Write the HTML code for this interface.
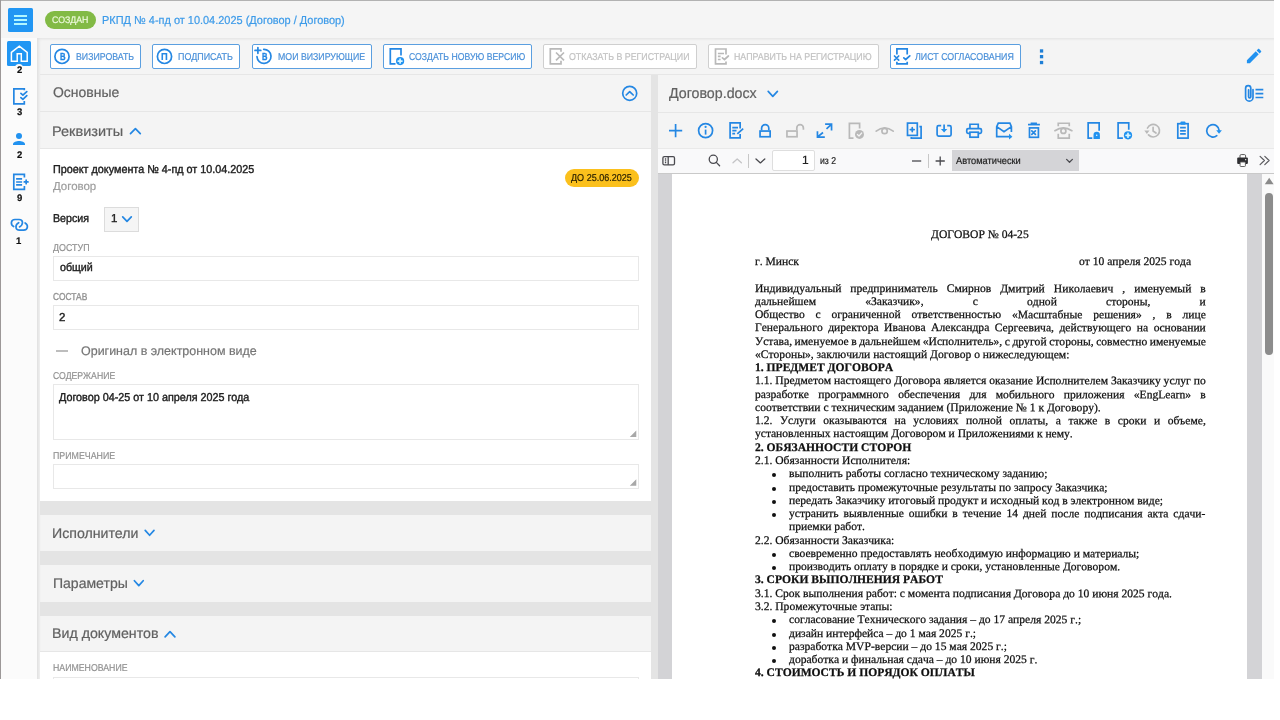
<!DOCTYPE html>
<html lang="ru"><head><meta charset="utf-8"><title>РКПД № 4-пд</title>
<style>
html,body{margin:0;padding:0;background:#fff;}
body{width:1280px;height:720px;overflow:hidden;position:relative;font-family:"Liberation Sans",sans-serif;}
#app{position:absolute;left:0;top:0;width:1280px;height:679px;overflow:hidden;will-change:transform;}
#app div{position:absolute;box-sizing:border-box;}
.t{white-space:pre;line-height:1;transform-origin:0 0;-webkit-text-stroke:0.2px currentColor;}
.d{white-space:pre;line-height:1;transform-origin:0 0;transform:rotate(0.03deg);font-kerning:none;font-variant-ligatures:none;font-family:"Liberation Serif",serif;font-size:11.59px;color:#101010;-webkit-text-stroke:0.25px #101010;}
.bl{width:4px;height:4px;border-radius:50%;background:#111;}
.btn{top:44px;height:25px;border:1px solid #5b9fe0;border-radius:2px;background:#fff;}
.btn.dis{border-color:#cfcfcf;}
.inp{left:53px;width:586px;border:1px solid #e8e8e8;background:#fff;}
.hdr{left:40px;width:611px;background:#f4f4f4;}
.gap{left:40px;width:611px;background:#e4e4e4;}
</style></head><body>
<div id="app">
<!-- frame lines -->
<div style="left:0;top:0;width:1274px;height:1px;background:#b2b2b2"></div>
<div style="left:0;top:1px;width:1274px;height:37px;background:#f5f5f5"></div>
<div style="left:0;top:0;width:1px;height:679px;background:#9c9898"></div>
<!-- sidebar -->
<div style="left:1px;top:38px;width:36px;height:641px;background:#fbfbfb"></div>
<!-- content base -->
<div style="left:37px;top:38px;width:1237px;height:641px;background:#f4f4f4;box-shadow:inset 3px 2px 3px -1px rgba(0,0,0,.08)"></div>
<!-- toolbar -->
<div style="left:40px;top:74px;width:1234px;height:1px;background:#e6e6e6"></div>
<div class="btn" style="left:50px;width:91px"></div>
<div class="btn" style="left:152px;width:88px"></div>
<div class="btn" style="left:252px;width:120px"></div>
<div class="btn" style="left:383px;width:149px"></div>
<div class="btn dis" style="left:543px;width:154px"></div>
<div class="btn dis" style="left:708.3px;width:170.3px"></div>
<div class="btn" style="left:890px;width:131px"></div>
<!-- left panel -->
<div style="left:40px;top:111px;width:611px;height:1px;background:#e6e6e6"></div>
<div style="left:40px;top:148px;width:611px;height:1px;background:#e6e6e6"></div>
<div style="left:40px;top:149px;width:611px;height:352px;background:#fff"></div>
<div style="left:565px;top:169px;width:74px;height:18px;border-radius:9px;background:#fbc01c"></div>
<div style="left:104px;top:207px;width:35px;height:25px;background:#f5f5f5;border:1px solid #dcdcdc"></div>
<div class="inp" style="top:256px;height:25px"></div>
<div class="inp" style="top:305px;height:25px"></div>
<div style="left:56px;top:350px;width:12px;height:1.5px;background:#bdbdbd"></div>
<div class="inp" style="top:384px;height:56px"></div>
<div class="inp" style="top:464.3px;height:24.5px"></div>
<div class="gap" style="top:501px;height:13.5px"></div>
<div class="gap" style="top:551px;height:14px"></div>
<div class="gap" style="top:602px;height:13.5px"></div>
<div style="left:40px;top:651px;width:611px;height:1px;background:#e6e6e6"></div>
<div style="left:40px;top:652px;width:611px;height:30px;background:#fff"></div>
<div class="inp" style="top:676.5px;height:25px"></div>
<!-- splitter -->
<div style="left:651px;top:75px;width:7px;height:604px;background:#e4e4e4"></div>
<!-- right panel -->
<div style="left:658px;top:111.5px;width:616px;height:1px;background:#e6e6e6"></div>
<div style="left:658px;top:147.5px;width:616px;height:1px;background:#e9e9e9"></div>
<div style="left:658px;top:148.5px;width:616px;height:24px;background:#f9f9fa"></div>
<div style="left:658px;top:172.5px;width:616px;height:1px;background:#c9c9c9"></div>
<div style="left:658px;top:173.5px;width:616px;height:506px;background:#d3d3d6"></div>
<div style="left:672.2px;top:173.5px;width:574.8px;height:506px;background:#fff"></div>
<div style="left:1262px;top:173.5px;width:12px;height:506px;background:#fafafa"></div>
<div style="left:1264.5px;top:193px;width:8.4px;height:161.5px;border-radius:4.2px;background:#8c8c8c"></div>
<div style="left:772.2px;top:150.1px;width:42.4px;height:20.7px;background:#fff;border:1px solid #dedede;border-radius:2px"></div>
<div style="left:952px;top:150px;width:127px;height:21px;background:#d4d4d7"></div>
<div style="left:748px;top:154px;width:1px;height:13.5px;background:#c8c8c8"></div>
<div style="left:928px;top:154px;width:1px;height:13.5px;background:#c8c8c8"></div>
<div style="left:45px;top:11px;width:51px;height:18px;border-radius:9px;background:#82ba45"></div>
<!-- sidebar buttons -->
<div style="left:8.4px;top:8px;width:24.4px;height:24px;border-radius:1.5px;background:#2196f3"></div>
<div style="left:14px;top:15px;width:13px;height:2px;background:#b0f6ff"></div>
<div style="left:14px;top:19px;width:13px;height:2px;background:#b0f6ff"></div>
<div style="left:14px;top:23px;width:13px;height:2px;background:#b0f6ff"></div>
<div style="left:7px;top:41.3px;width:24px;height:24.3px;border-radius:1.5px;background:#2196f3"></div>
<div style="left:15px;top:63.8px;width:8.4px;height:8.4px;border-radius:50%;background:#fbfbfb"></div>
<div class="t" style="left:51.70px;top:15.00px;font-size:9.5px;color:#eefadc;transform:scale(0.9254,1.000) rotate(0.03deg);">СОЗДАН</div>
<div class="t" style="left:101.80px;top:15.00px;font-size:11.5px;color:#3d9be9;transform:scale(0.9521,1.000) rotate(0.03deg);">РКПД № 4-пд от 10.04.2025 (Договор / Договор)</div>
<div class="t" style="left:75.60px;top:52.00px;font-size:10px;color:#4a90d9;transform:scale(0.8762,1.000) rotate(0.03deg);">ВИЗИРОВАТЬ</div>
<div class="t" style="left:178.00px;top:52.00px;font-size:10px;color:#4a90d9;transform:scale(0.8935,1.000) rotate(0.03deg);">ПОДПИСАТЬ</div>
<div class="t" style="left:277.50px;top:52.00px;font-size:10px;color:#4a90d9;transform:scale(0.8783,1.000) rotate(0.03deg);">МОИ ВИЗИРУЮЩИЕ</div>
<div class="t" style="left:409.20px;top:52.00px;font-size:10px;color:#4a90d9;transform:scale(0.8677,1.000) rotate(0.03deg);">СОЗДАТЬ НОВУЮ ВЕРСИЮ</div>
<div class="t" style="left:569.00px;top:52.00px;font-size:10px;color:#c2c2c2;transform:scale(0.8834,1.000) rotate(0.03deg);">ОТКАЗАТЬ В РЕГИСТРАЦИИ</div>
<div class="t" style="left:733.90px;top:52.00px;font-size:10px;color:#c2c2c2;transform:scale(0.8825,1.000) rotate(0.03deg);">НАПРАВИТЬ НА РЕГИСТРАЦИЮ</div>
<div class="t" style="left:915.20px;top:52.00px;font-size:10px;color:#4a90d9;transform:scale(0.8862,1.000) rotate(0.03deg);">ЛИСТ СОГЛАСОВАНИЯ</div>
<div class="t" style="left:59.60px;top:52.00px;font-size:10.2px;color:#2487e3;font-weight:700;transform:scale(0.7571,1.000) rotate(0.03deg);-webkit-text-stroke-width:0.35px;">В</div>
<div class="t" style="left:161.30px;top:52.00px;font-size:10.2px;color:#2487e3;font-weight:700;transform:scale(0.9143,1.000) rotate(0.03deg);">П</div>
<div class="t" style="left:261.80px;top:52.00px;font-size:10.2px;color:#2487e3;font-weight:700;transform:scale(0.7429,1.000) rotate(0.03deg);-webkit-text-stroke-width:0.35px;">В</div>
<div class="t" style="left:52.80px;top:85.00px;font-size:14px;color:#616161;transform:scale(0.9964,1.000) rotate(0.03deg);">Основные</div>
<div class="t" style="left:52.46px;top:124.00px;font-size:14px;color:#616161;transform:scale(1.0364,1.000) rotate(0.03deg);">Реквизиты</div>
<div class="t" style="left:52.49px;top:526.00px;font-size:14px;color:#616161;transform:scale(1.0121,1.000) rotate(0.03deg);">Исполнители</div>
<div class="t" style="left:52.50px;top:576.00px;font-size:14px;color:#616161;transform:scale(1.0018,1.000) rotate(0.03deg);">Параметры</div>
<div class="t" style="left:52.49px;top:626.00px;font-size:14px;color:#616161;transform:scale(1.0147,1.000) rotate(0.03deg);">Вид документов</div>
<div class="t" style="left:668.90px;top:86.00px;font-size:14.5px;color:#616161;transform:scale(0.9805,1.000) rotate(0.03deg);">Договор.docx</div>
<div class="t" style="left:53.10px;top:164.00px;font-size:11.5px;color:#212121;transform:scale(0.9388,1.000) rotate(0.03deg);-webkit-text-stroke-width:0.4px;">Проект документа № 4-пд от 10.04.2025</div>
<div class="t" style="left:52.90px;top:181.00px;font-size:11.5px;color:#9e9e9e;transform:scale(0.9947,1.000) rotate(0.03deg);">Договор</div>
<div class="t" style="left:570.80px;top:173.00px;font-size:10px;color:#2a2000;transform:scale(0.9024,1.000) rotate(0.03deg);">ДО 25.06.2025</div>
<div class="t" style="left:53.00px;top:213.00px;font-size:11.5px;color:#212121;transform:scale(0.9266,1.000) rotate(0.03deg);-webkit-text-stroke-width:0.4px;">Версия</div>
<div class="t" style="left:111.25px;top:213.00px;font-size:11.5px;color:#212121;transform:scale(1.0000,1.000) rotate(0.03deg);-webkit-text-stroke-width:0.4px;">1</div>
<div class="t" style="left:53.00px;top:243.00px;font-size:10px;color:#929292;transform:scale(0.8899,1.000) rotate(0.03deg);">ДОСТУП</div>
<div class="t" style="left:60.20px;top:262.00px;font-size:11.5px;color:#212121;transform:scale(0.9292,1.000) rotate(0.03deg);-webkit-text-stroke-width:0.4px;">общий</div>
<div class="t" style="left:53.00px;top:292.00px;font-size:10px;color:#929292;transform:scale(0.8415,1.000) rotate(0.03deg);-webkit-text-stroke-width:0.35px;">СОСТАВ</div>
<div class="t" style="left:59.30px;top:312.00px;font-size:11.5px;color:#212121;transform:scale(1.0000,1.000) rotate(0.03deg);-webkit-text-stroke-width:0.4px;">2</div>
<div class="t" style="left:80.90px;top:345.00px;font-size:12.5px;color:#757575;transform:scale(0.9974,1.000) rotate(0.03deg);">Оригинал в электронном виде</div>
<div class="t" style="left:53.00px;top:371.00px;font-size:10px;color:#929292;transform:scale(0.8696,1.000) rotate(0.03deg);">СОДЕРЖАНИЕ</div>
<div class="t" style="left:59.40px;top:392.00px;font-size:11.5px;color:#212121;transform:scale(0.9378,1.000) rotate(0.03deg);-webkit-text-stroke-width:0.4px;">Договор 04-25 от 10 апреля 2025 года</div>
<div class="t" style="left:53.00px;top:451.00px;font-size:10px;color:#929292;transform:scale(0.8829,1.000) rotate(0.03deg);">ПРИМЕЧАНИЕ</div>
<div class="t" style="left:53.00px;top:663.00px;font-size:10px;color:#929292;transform:scale(0.8749,1.000) rotate(0.03deg);">НАИМЕНОВАНИЕ</div>
<div class="t" style="left:16.90px;top:65.00px;font-size:9.5px;color:#111;font-weight:700;transform:scale(1.0000,1.000) rotate(0.03deg);">2</div>
<div class="t" style="left:16.90px;top:107.00px;font-size:9.5px;color:#111;font-weight:700;transform:scale(1.0000,1.000) rotate(0.03deg);">3</div>
<div class="t" style="left:16.90px;top:150.00px;font-size:9.5px;color:#111;font-weight:700;transform:scale(1.0000,1.000) rotate(0.03deg);">2</div>
<div class="t" style="left:16.90px;top:193.00px;font-size:9.5px;color:#111;font-weight:700;transform:scale(1.0000,1.000) rotate(0.03deg);">9</div>
<div class="t" style="left:16.40px;top:236.00px;font-size:9.5px;color:#111;font-weight:700;transform:scale(1.0000,1.000) rotate(0.03deg);">1</div>
<div class="t" style="left:801.62px;top:154.00px;font-size:12px;color:#222;transform:scale(1.0000,1.000) rotate(0.03deg);">1</div>
<div class="t" style="left:819.75px;top:156.00px;font-size:10px;color:#222;transform:scale(0.8707,1.000) rotate(0.03deg);">из 2</div>
<div class="t" style="left:956.00px;top:156.00px;font-size:10px;color:#222;transform:scale(0.9268,1.000) rotate(0.03deg);">Автоматически</div>
<div class="d" style="top:229.00px;left:931.36px;">ДОГОВОР № 04-25</div>
<div class="d" style="top:256.00px;left:754.80px;">г. Минск</div>
<div class="d" style="top:256.00px;left:1079.30px;">от 10 апреля 2025 года</div>
<div class="d" style="top:283.00px;left:754.80px;word-spacing:6.109px;">Индивидуальный предприниматель Смирнов Дмитрий Николаевич , именуемый в</div>
<div class="d" style="top:296.00px;left:754.80px;word-spacing:46.260px;">дальнейшем «Заказчик», с одной стороны, и</div>
<div class="d" style="top:309.00px;left:754.80px;word-spacing:7.910px;">Общество с ограниченной ответственностью «Масштабные решения» , в лице</div>
<div class="d" style="top:322.00px;left:754.80px;word-spacing:2.590px;">Генерального директора Иванова Александра Сергеевича, действующего на основании</div>
<div class="d" style="top:336.00px;left:754.80px;word-spacing:-0.337px;">Устава, именуемое в дальнейшем «Исполнитель», с другой стороны, совместно именуемые</div>
<div class="d" style="top:349.00px;left:754.80px;">«Стороны», заключили настоящий Договор о нижеследующем:</div>
<div class="d" style="top:362.00px;font-weight:700;left:754.80px;">1. ПРЕДМЕТ ДОГОВОРА</div>
<div class="d" style="top:375.00px;left:754.80px;word-spacing:0.058px;">1.1. Предметом настоящего Договора является оказание Исполнителем Заказчику услуг по</div>
<div class="d" style="top:389.00px;left:754.80px;word-spacing:6.419px;">разработке программного обеспечения для мобильного приложения «EngLearn» в</div>
<div class="d" style="top:402.00px;left:754.80px;">соответствии с техническим заданием (Приложение № 1 к Договору).</div>
<div class="d" style="top:415.00px;left:754.80px;word-spacing:4.626px;">1.2. Услуги оказываются на условиях полной оплаты, а также в сроки и объеме,</div>
<div class="d" style="top:428.00px;left:754.80px;">установленных настоящим Договором и Приложениями к нему.</div>
<div class="d" style="top:442.00px;font-weight:700;left:754.80px;">2. ОБЯЗАННОСТИ СТОРОН</div>
<div class="d" style="top:455.00px;left:754.80px;">2.1. Обязанности Исполнителя:</div>
<div class="d" style="top:468.00px;left:789.20px;">выполнить работы согласно техническому заданию;</div>
<div class="d" style="top:482.00px;left:789.20px;">предоставить промежуточные результаты по запросу Заказчика;</div>
<div class="d" style="top:495.00px;left:789.20px;">передать Заказчику итоговый продукт и исходный код в электронном виде;</div>
<div class="d" style="top:508.00px;left:789.20px;word-spacing:2.046px;">устранить выявленные ошибки в течение 14 дней после подписания акта сдачи-</div>
<div class="d" style="top:521.00px;left:789.20px;">приемки работ.</div>
<div class="d" style="top:535.00px;left:754.80px;">2.2. Обязанности Заказчика:</div>
<div class="d" style="top:548.00px;left:789.20px;">своевременно предоставлять необходимую информацию и материалы;</div>
<div class="d" style="top:561.00px;left:789.20px;">производить оплату в порядке и сроки, установленные Договором.</div>
<div class="d" style="top:574.00px;font-weight:700;left:754.80px;">3. СРОКИ ВЫПОЛНЕНИЯ РАБОТ</div>
<div class="d" style="top:588.00px;left:754.80px;">3.1. Срок выполнения работ: с момента подписания Договора до 10 июня 2025 года.</div>
<div class="d" style="top:601.00px;left:754.80px;">3.2. Промежуточные этапы:</div>
<div class="d" style="top:614.00px;left:789.20px;">согласование Технического задания – до 17 апреля 2025 г.;</div>
<div class="d" style="top:628.00px;left:789.20px;">дизайн интерфейса – до 1 мая 2025 г.;</div>
<div class="d" style="top:641.00px;left:789.20px;">разработка MVP-версии – до 15 мая 2025 г.;</div>
<div class="d" style="top:654.00px;left:789.20px;">доработка и финальная сдача – до 10 июня 2025 г.</div>
<div class="d" style="top:667.00px;font-weight:700;left:754.80px;">4. СТОИМОСТЬ И ПОРЯДОК ОПЛАТЫ</div>
<div class="bl" style="left:772.4px;top:472.50px"></div>
<div class="bl" style="left:772.4px;top:486.50px"></div>
<div class="bl" style="left:772.4px;top:499.50px"></div>
<div class="bl" style="left:772.4px;top:512.50px"></div>
<div class="bl" style="left:772.4px;top:552.50px"></div>
<div class="bl" style="left:772.4px;top:565.50px"></div>
<div class="bl" style="left:772.4px;top:618.50px"></div>
<div class="bl" style="left:772.4px;top:632.50px"></div>
<div class="bl" style="left:772.4px;top:645.50px"></div>
<div class="bl" style="left:772.4px;top:658.50px"></div>
<svg width="1280" height="679" viewBox="0 0 1280 679" style="position:absolute;left:0;top:0" fill="none" stroke-linecap="butt" stroke-linejoin="miter">
<defs><style>
.b{stroke:#2487e3;stroke-width:1.7}
.g{stroke:#b9b9b9;stroke-width:1.7}
.k{stroke:#4a4a4f;stroke-width:1.3}
.bf{fill:#2192f0;stroke:none}
.gf{fill:#b9b9b9;stroke:none}
.r{stroke-linecap:round;stroke-linejoin:round}
.lt{font-family:"Liberation Sans",sans-serif;font-weight:700;font-size:9.5px;fill:#2487e3;text-anchor:middle}
</style></defs>
<!-- sidebar: home -->
<path d="M11.4 52.3 L19.3 46.1 L27.2 52.3 V61.2 H21.3 V53.8 H17.2 V61.2 H11.4 Z" stroke="#fff" stroke-width="1.5" stroke-linejoin="miter"/>
<!-- sidebar: doc-check -->
<path class="b" d="M24.3 101.100 V103.900 H13.850 V88.800 H24.300 V90.300"/>
<path class="b r" stroke-width="1.6" d="M20.900 93.300 l2 1.800 l3.900 -3.500 M20.900 97.600 l2 1.800 l3.900 -3.700"/>
<!-- sidebar: person -->
<circle class="bf" cx="19" cy="135.900" r="3"/>
<path class="bf" d="M13 145.100 v-1 c0-2.300 3.500-3.200 6-3.200 s6 0.900 6 3.200 v1 z"/>
<!-- sidebar: doc-lines-plus -->
<path class="b" d="M24.400 177.500 V174.400 H13.800 V189.400 H24.400 V186.100" stroke-width="1.600"/>
<path class="b" d="M16.100 178.900 h6 M16.100 182 h6 M16.100 184.900 h6" stroke-width="1.600"/>
<path class="b r" d="M24.300 181.900 h3.700 M26.150 180 v3.700" stroke-width="2"/>
<!-- sidebar: link -->
<path class="b r" stroke-width="1.700" d="M13.600 226.500 C10.400 224.600 10.500 219.500 15 219.500 H19 C23.600 219.500 23.500 224.700 19.500 226.900 M25.100 222.900 C28.500 224.700 28.300 230.200 23.600 230.200 H19.600 C15 230.200 14.800 224.800 18.700 222.700"/>
<!-- toolbar buttons -->
<circle class="b" cx="62" cy="56.4" r="7.1" stroke-width="1.4"/>
<circle class="b" cx="164.5" cy="56.4" r="7.1" stroke-width="1.4"/>
<path class="b r" stroke-width="1.300" d="M263.700 49.400 A7 7 0 1 1 257 56.700"/>
<path class="b r" stroke-width="1.600" d="M255 50.400 h5.800 M257.900 47.500 v5.800"/>
<path class="b" d="M395.500 63.900 H390.300 V48.900 H401 V55.600"/>
<circle class="bf" cx="400.100" cy="61.100" r="4.100"/><path class="r" d="M398.200 61.100 h3.800 M400.100 59.200 v3.800" stroke="#d8f6ff" stroke-width="1.700"/>
<path class="g" d="M561 51.700 V48.900 H550.300 V63.900 H561 V60.700"/><path class="g" stroke-width="1.500" d="M556 52.500 l8 7.800 M564 52.500 l-8 7.800"/>
<path class="g" d="M726 54.500 V49 H715.500 V63.900 H726 V61.500"/><path class="g" stroke-width="1.400" d="M717.900 53.500 h6.100 M717.900 56.400 h2.700 M717.900 59.500 h2.700"/><path class="g r" stroke-width="1.500" d="M722.400 57.800 l2.100 1.700 l3.900 -3.500"/>
<path class="b" d="M896.900 54.500 V48.900 H907.200 V54.500 M896.900 61.800 V63.900 H907.200 V61.800"/><path class="b r" stroke-width="1.600" d="M894.500 56 l4.200 4.100 M898.700 56 l-4.200 4.100 M903.800 57.800 l1.900 1.700 l4.100 -3.700"/>
<rect x="1039.900" y="49.300" width="3.300" height="3.300" fill="#1e7fd6"/><rect x="1039.900" y="55" width="3.300" height="3.300" fill="#1e7fd6"/><rect x="1039.900" y="60.900" width="3.300" height="3.300" fill="#1e7fd6"/>
<path class="bf" transform="translate(1244.500 46.400) scale(0.800)" d="M3 17.250V21h3.750L17.810 9.940l-3.750-3.750L3 17.250zM20.710 7.040c.39-.39.390-1.020 0-1.410l-2.340-2.340c-.39-.39-1.020-.39-1.410 0l-1.830 1.830 3.750 3.750 1.830-1.830z"/>
<!-- panel header icons -->
<circle class="b" cx="629.700" cy="93.300" r="7" stroke-width="1.500"/><path class="b r" stroke-width="1.600" d="M626.200 95 l3.500 -3.400 l3.500 3.400"/>
<path class="b r" stroke-width="1.700" d="M130.500 133.700 L135.400 128.700 L140.300 133.700"/>
<path class="b r" stroke-width="1.700" d="M145.200 530.400 L149.600 535.300 L154 530.400"/>
<path class="b r" stroke-width="1.700" d="M134.400 580.700 L138.800 585.600 L143.200 580.700"/>
<path class="b r" stroke-width="1.700" d="M165.100 636.900 L170 631.700 L174.900 636.900"/>
<path class="b r" stroke-width="1.700" d="M768.200 91.400 L772.800 96.300 L777.400 91.400"/>
<path class="b r" stroke-width="1.600" d="M122.700 216.800 L127 221.300 L131.300 216.800"/>
<!-- paperclip list -->
<path class="b r" stroke-width="1.300" d="M1253 89.500 V97.400 a3.700 3.700 0 0 1 -7.400 0 V88.300 a2.600 2.600 0 0 1 5.200 0 V96.800 a1.100 1.100 0 0 1 -2.200 0 V89.800"/>
<path class="b" stroke-width="1.700" d="M1255.500 89.700 h7.800 M1255.500 93.600 h7.800 M1255.500 97.500 h7.800"/>
<!-- file toolbar icons -->
<path class="b" stroke-width="1.800" d="M669 130.700 h13.200 M675.600 124.100 v13.200"/>
<circle class="b" cx="705.600" cy="130.600" r="7" stroke-width="1.600"/><path class="b" stroke-width="1.700" d="M705.600 129.600 v5"/><circle class="bf" cx="705.600" cy="126.900" r="1.100"/>
<path class="b" stroke-width="1.900" d="M740.150 128.400 V122.950 H730.100 V137.950 H740.150 V134"/><path class="b" stroke-width="1.500" d="M732.300 127.700 h5.700 M732.300 130.600 h4.200 M732.300 133.700 h2.800"/><path class="b" stroke-width="1.800" d="M737.300 133.900 l5.900 -5.300"/>
<rect class="b" stroke-width="1.900" x="760.050" y="131.050" width="10.100" height="5.700"/><path class="b" stroke-width="1.600" d="M761.600 130.200 v-2 a3.600 3.600 0 0 1 7.200 0 v2"/>
<rect class="g" stroke-width="1.900" x="786.950" y="131.050" width="10.100" height="5.700"/><path class="g" stroke-width="1.600" d="M796.800 130.200 v-2.300 a3.300 3.300 0 0 1 6.600 0 v1.900"/>
<path class="b" stroke-width="1.700" d="M825.100 124.150 H831.550 V130.600 M831.400 124.300 L826.500 128.800 M817.450 131.200 V137.050 H824.800 M817.600 136.900 L823 132.500"/>
<path class="g" d="M853.500 138.100 H849.400 V123.400 H859.600 V128.500"/><circle class="gf" cx="859.500" cy="134.400" r="4.500"/><path class="r" d="M857.400 134.500 l1.600 1.500 l2.700 -3" stroke="#f4f4f4" stroke-width="1.200"/>
<path class="g r" stroke-width="1.500" d="M876.200 131.200 Q884.600 124.600 893.200 131.200"/><circle class="g" cx="884.600" cy="131" r="2.700" stroke-width="1.500"/>
<rect class="b" x="907.500" y="123.100" width="9.800" height="12.300"/><path class="b" d="M919.400 126.700 h1.700 V138.100 H911.300 v-1.200"/><path class="b r" stroke-width="1.700" d="M910.300 129.600 h3.900 M912.250 127.650 v3.900"/>
<path class="b" stroke-width="1.600" d="M941.200 125.700 H938.600 a1.500 1.500 0 0 0 -1.500 1.500 V134.600 a1.500 1.500 0 0 0 1.500 1.500 H949.600 a1.500 1.500 0 0 0 1.500 -1.500 V127.200 a1.500 1.500 0 0 0 -1.500 -1.500 H947.200"/><path class="b" d="M944.100 124.400 v5.500"/><path class="bf" d="M940.900 129 h6.400 l-3.200 3.500 z"/>
<path class="b" stroke-width="1.500" d="M969.950 128.600 V124.250 H978.250 V128.600"/><rect class="b" stroke-width="1.500" x="966.750" y="128.700" width="14.700" height="4.700" rx="1.300"/><rect class="b" stroke-width="1.500" x="969.950" y="132.200" width="8.300" height="5" fill="#f4f4f4"/>
<path class="b" stroke-width="1.600" d="M1011.400 131.900 V126.600 L1009.900 123.200 H998.300 L996.700 126.600 V136.700 H1009.600 M996.700 126.600 L1004 131.600 L1011.400 126.600"/><path class="bf" d="M1009 133.800 L1012.400 136.700 L1009 139.600 Z"/>
<path class="b" stroke-width="1.500" d="M1028 124.600 h11.900"/><path class="b" stroke-width="1.400" d="M1031.500 124.300 v-0.900 h4.600 v0.900"/><rect class="b" stroke-width="1.600" x="1029.500" y="127.900" width="8.900" height="9.400"/><path class="b r" stroke-width="1.600" d="M1031.800 130.800 l3.600 3.600 M1035.400 130.800 l-3.600 3.600"/>
<path class="g" d="M1058.250 126.300 V123.250 H1069.250 V126.300 M1058.250 133.700 V138.050 H1069.250 V133.700"/><path class="g r" stroke-width="1.500" d="M1054.900 130.700 Q1063.400 124.900 1071.900 130.700"/><circle class="g" cx="1063.400" cy="130.900" r="2.500" stroke-width="1.500"/>
<path class="b" d="M1092.300 138.050 H1088.150 V122.850 H1099.150 V130.800"/><path class="bf" d="M1093.500 138.900 V135 a3.200 3.200 0 0 1 6.400 0 V138.900 Z"/><circle cx="1096.700" cy="135.200" r="0.800" fill="#e8f6ff"/>
<path class="b" d="M1122.900 138.050 H1118.100 V122.850 H1128.750 V129.800"/><circle class="bf" cx="1128" cy="135.300" r="4.100"/><path class="r" d="M1126.100 135.300 h3.800 M1128 133.400 v3.800" stroke="#d8f6ff" stroke-width="1.700"/>
<path class="g r" stroke-width="1.600" d="M1147.500 128 a6.300 6.300 0 1 1 1 6.900"/><path class="gf" d="M1144.300 130.600 h5.200 l-2.600 3.400 z"/><path class="g r" stroke-width="1.500" d="M1153.100 127.300 v3.700 l2.900 2"/>
<rect class="b" stroke-width="1.600" x="1177.800" y="123.700" width="10.300" height="14.400"/><rect class="bf" x="1180.500" y="121.500" width="4.900" height="3.200" rx="0.800"/><path class="b" stroke-width="1.400" d="M1180.100 127.700 h5.700 M1180.100 130.800 h5.700 M1180.100 133.900 h5.700"/>
<path class="b r" stroke-width="1.600" d="M1216.800 135.700 a6.200 6.200 0 1 1 2.300 -5.300"/><path class="bf" d="M1216.200 130.300 h5.700 l-2.850 3.400 z"/>
<!-- pdf toolbar -->
<rect class="k" x="662.9" y="156.6" width="11.6" height="8.2" rx="1.4"/><path class="k" d="M668.2 156.6 v8.200 M664.900 159 h1.300 M664.900 160.800 h1.300 M664.900 162.600 h1.300" stroke-width="1"/>
<circle class="k" cx="713.300" cy="159.300" r="4.100"/><path class="k r" d="M716.300 162.400 l3.300 3.300" stroke-width="1.500"/>
<path class="r" d="M733 162.700 L737.200 158.900 L741.400 162.700" stroke="#c4c4c6" stroke-width="1.300"/>
<path class="k r" d="M756 159 L760.400 162.900 L764.800 159"/>
<path class="k" d="M912 161 h9.200"/>
<path class="k" d="M935.600 161 h9.200 M940.200 156.400 v9.200"/>
<path class="k r" stroke-width="1.2" d="M1066.6 159.4 L1069.5 162.2 L1072.4 159.4"/>
<rect x="1240" y="154.6" width="5.6" height="4" rx="1.2" fill="#fff" stroke="#555" stroke-width="1"/><rect x="1237.2" y="157.6" width="10.7" height="6.3" rx="1" fill="#2e2e31"/><rect x="1240.1" y="162" width="5.3" height="4.5" rx="0.8" fill="#fff" stroke="#555" stroke-width="0.9"/><circle cx="1245.7" cy="159.7" r="0.65" fill="#fff"/>
<path class="r" stroke-width="1.2" stroke="#5a5a5e" d="M1260.1 156.4 L1264.4 160.5 L1260.1 164.6 M1264.8 156.4 L1269.1 160.5 L1264.8 164.6"/>
<path fill="#8a8a8a" stroke="none" d="M1264.800 184.300 L1269.200 177.800 L1273.600 184.300 Z"/>
<!-- textarea grips -->
<path fill="#a8a8a8" stroke="none" d="M636.3 430.4 V436.9 H629.8 Z M636.3 479.3 V485.8 H629.8 Z"/>
</svg>

</div>
</body></html>
